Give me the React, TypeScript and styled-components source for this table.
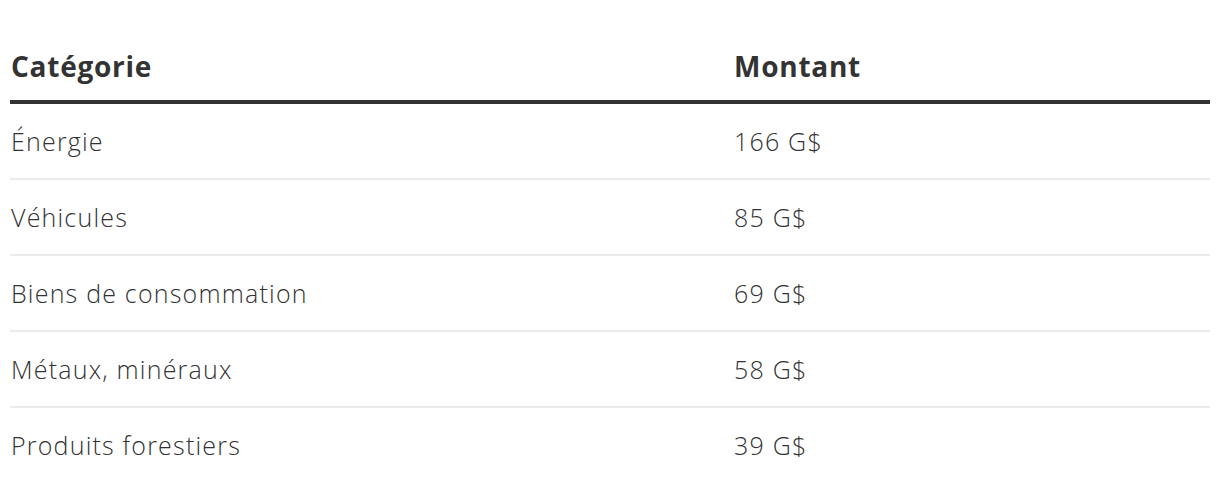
import React from "react";
import styled, { createGlobalStyle } from "styled-components";

const Global = createGlobalStyle`
  html, body { margin: 0; padding: 0; background: #fff; }
  body { font-family: "Open Sans", "Liberation Sans", sans-serif; color: #333; }
`;

const Wrap = styled.div`
  padding: 47px 10px 0 10px;
`;

const Table = styled.table`
  width: 1200px;
  border-collapse: collapse;
  table-layout: fixed;
`;

const Th = styled.th<{ $w?: string }>`
  text-align: left;
  font-weight: 700;
  font-size: 28px;
  letter-spacing: 0.75px;
  color: #333;
  padding: 0 0 15px 1px;
  border-bottom: 4px solid #333;
  width: ${(p) => p.$w || "auto"};
`;

const Td = styled.td`
  font-weight: 300;
  font-size: 25px;
  letter-spacing: 1.2px;
  color: #333;
  padding: 0 0 0 1px;
  height: 74px;
`;

const Tr = styled.tr`
  & + & td { border-top: 2px solid #ebebeb; }
`;

const rows = [
  ["Énergie", "166 G$"],
  ["Véhicules", "85 G$"],
  ["Biens de consommation", "69 G$"],
  ["Métaux, minéraux", "58 G$"],
  ["Produits forestiers", "39 G$"],
];

export default function App() {
  return (
    <>
      <Global />
      <Wrap>
        <Table>
          <thead>
            <tr>
              <Th $w="722px">Catégorie</Th>
              <Th>Montant</Th>
            </tr>
          </thead>
          <tbody>
            {rows.map(([c, m]) => (
              <Tr key={c}>
                <Td>{c}</Td>
                <Td>{m}</Td>
              </Tr>
            ))}
          </tbody>
        </Table>
      </Wrap>
    </>
  );
}
